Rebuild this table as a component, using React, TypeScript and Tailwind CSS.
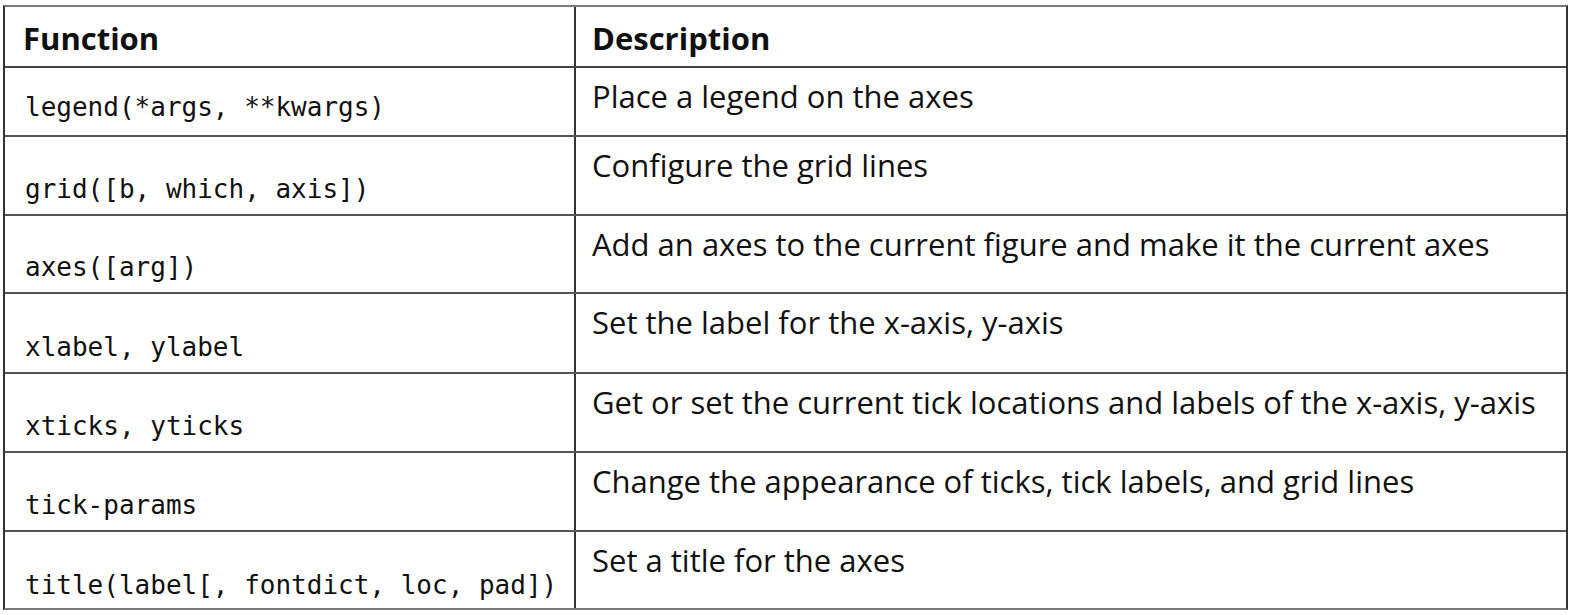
import React from 'react';

const rows = [
    { fn: 'legend(*args, **kwargs)', desc: 'Place a legend on the axes', h: 'h-[69px]', pb: 'pb-[13px]' },
    { fn: 'grid([b, which, axis])', desc: 'Configure the grid lines', h: 'h-[79px]', pb: 'pb-[10px]' },
    { fn: 'axes([arg])', desc: 'Add an axes to the current figure and make it the current axes', h: 'h-[78px]', pb: 'pb-[10px]' },
    { fn: 'xlabel, ylabel', desc: 'Set the label for the x-axis, y-axis', h: 'h-[80px]', pb: 'pb-[10px]' },
    { fn: 'xticks, yticks', desc: 'Get or set the current tick locations and labels of the x-axis, y-axis', h: 'h-[79px]', pb: 'pb-[10px]' },
    { fn: 'tick-params', desc: 'Change the appearance of ticks, tick labels, and grid lines', h: 'h-[79px]', pb: 'pb-[10px]' },
    { fn: 'title(label[, fontdict, loc, pad])', desc: 'Set a title for the axes', h: 'h-[76px]', pb: 'pb-[8px]' },
];

export default function App() {
    return (
        <div className="w-[1574px] h-[615px] bg-white pt-[5px] pl-[3px] text-[#111]">
            <div className="w-[1565px] border-t-2 border-b-2 border-t-[#7a7a7a] border-b-[#7a7a7a] border-l-2 border-r-2 border-l-[#333] border-r-[#333]">
                <div className="flex h-[61px] border-b-2 border-[#444]">
                    <div className="w-[571px] border-r-2 border-[#333] pl-[18px] pt-[14px] font-['Open_Sans',sans-serif] font-bold text-[31px] leading-[34px]">
                        Function
                    </div>
                    <div className="flex-1 pl-[16px] pt-[14px] font-['Open_Sans',sans-serif] font-bold text-[31px] leading-[34px]">
                        Description
                    </div>
                </div>
                {rows.map((r, i) => (
                    <div key={r.fn} className={`flex ${r.h} ${i < rows.length - 1 ? 'border-b-2 border-[#555]' : ''}`}>
                        <div className={`w-[571px] border-r-2 border-[#333] pl-[20px] ${r.pb} flex items-end font-['DejaVu_Sans_Mono',monospace] text-[26px] leading-[30px] whitespace-nowrap`}>
                            {r.fn}
                        </div>
                        <div className="flex-1 pl-[16px] pt-[11px] font-['Open_Sans',sans-serif] text-[31px] leading-[34px] whitespace-nowrap">
                            {r.desc}
                        </div>
                    </div>
                ))}
            </div>
        </div>
    );
}
